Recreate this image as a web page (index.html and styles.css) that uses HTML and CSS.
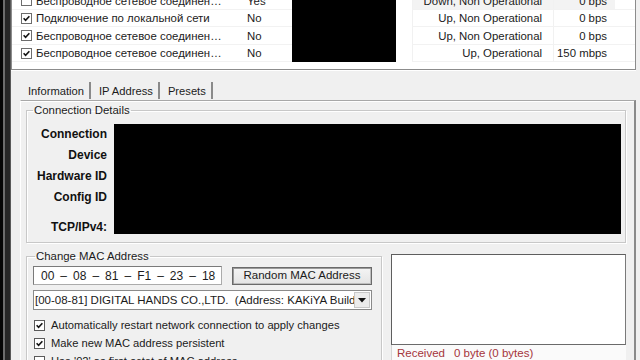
FILE: index.html
```html
<!DOCTYPE html>
<html>
<head>
<meta charset="utf-8">
<link rel="stylesheet" href="styles.css">
</head>
<body>
<div class="window">
  <div class="edge"></div>
  <div class="main">
    <div class="list">
      <div class="rows">
        <div class="redact"></div>

        <div class="c name"><span class="cb"></span><span class="txt">Беспроводное сетевое соединение 2</span></div>
        <div class="c yes">Yes</div>
        <div class="c st hl">Down, Non Operational</div>
        <div class="c bps hl">0 bps</div>
        <div class="c rest"></div>

        <div class="c name"><span class="cb on"><svg viewBox="0 0 11 11"><path d="M2 5.2 L4.4 7.8 L9 2.8" /></svg></span><span class="txt">Подключение по локальной сети</span></div>
        <div class="c yes">No</div>
        <div class="c st">Up, Non Operational</div>
        <div class="c bps">0 bps</div>
        <div class="c rest"></div>

        <div class="c name"><span class="cb on"><svg viewBox="0 0 11 11"><path d="M2 5.2 L4.4 7.8 L9 2.8" /></svg></span><span class="txt">Беспроводное сетевое соединение 3</span></div>
        <div class="c yes">No</div>
        <div class="c st">Up, Non Operational</div>
        <div class="c bps">0 bps</div>
        <div class="c rest"></div>

        <div class="c name"><span class="cb on"><svg viewBox="0 0 11 11"><path d="M2 5.2 L4.4 7.8 L9 2.8" /></svg></span><span class="txt">Беспроводное сетевое соединение 4</span></div>
        <div class="c yes">No</div>
        <div class="c st">Up, Operational</div>
        <div class="c bps">150 mbps</div>
        <div class="c rest"></div>
      </div>
    </div>

    <div class="tabs">
      <div class="tab active">Information</div>
      <div class="tab">IP Address</div>
      <div class="tab">Presets</div>
    </div>

    <div class="page">
      <fieldset class="group conn">
        <legend>Connection Details</legend>
        <div class="details">
          <div class="lbl">Connection</div>
          <div class="blackbox"></div>
          <div class="lbl">Device</div>
          <div class="lbl">Hardware ID</div>
          <div class="lbl">Config ID</div>
          <div class="lbl last">TCP/IPv4:</div>
        </div>
      </fieldset>

      <div class="lower">
        <fieldset class="group mac">
          <legend>Change MAC Address</legend>
          <div class="macrow">
            <div class="macinput"><span>00</span><span>–</span><span>08</span><span>–</span><span>81</span><span>–</span><span>F1</span><span>–</span><span>23</span><span>–</span><span>18</span></div>
            <div class="btn"><span>Random MAC Address</span></div>
          </div>
          <div class="select">
            <span class="seltext">[00-08-81] DIGITAL HANDS CO.,LTD.&nbsp; (Address: KAKiYA Building 4F)</span>
            <span class="arrow"><svg viewBox="0 0 8 5" width="8" height="5"><path d="M0 0 H8 L4 4.5 Z"/></svg></span>
          </div>
          <div class="options">
            <div class="opt"><span class="cb flat on"><svg viewBox="0 0 11 11"><path d="M2 5.2 L4.4 7.8 L9 2.8" /></svg></span>Automatically restart network connection to apply changes</div>
            <div class="opt"><span class="cb flat on"><svg viewBox="0 0 11 11"><path d="M2 5.2 L4.4 7.8 L9 2.8" /></svg></span>Make new MAC address persistent</div>
            <div class="opt"><span class="cb flat"></span>Use '02' as first octet of MAC address</div>
          </div>
        </fieldset>
        <div class="side">
          <div class="log"></div>
          <div class="status"><span class="recv">Received</span><span>0 byte (0 bytes)</span></div>
        </div>
      </div>
    </div>
  </div>
</div>
</body>
</html>
```

FILE: styles.css
```css
html, body {
  margin: 0;
  padding: 0;
}
body {
  width: 640px;
  height: 360px;
  overflow: hidden;
  background: #f0f0f0;
  font-family: "Liberation Sans", Arial, sans-serif;
  font-size: 11px;
  color: #1b1b1b;
}
.window {
  display: flex;
  height: 360px;
}
.edge {
  width: 11px;
  flex: none;
  background: linear-gradient(to right, #050505 0 3px, #6c6c6c 3px 5px, #262626 5px 10px, #5a5a5a 10px 11px);
}
.main {
  flex: 1;
  min-width: 0;
  display: flex;
  flex-direction: column;
}

/* list view */
.list {
  height: 70px;
  flex: none;
  box-sizing: border-box;
  overflow: hidden;
  background: #fff;
  border: 1px solid #8c8c8c;
  border-top: 0;
  margin-right: 4px;
  box-shadow: 0 1px 0 #fff;
}
.rows {
  display: grid;
  grid-template-columns: 228px 52px 120px 141px 62px 1fr;
  grid-auto-rows: 17.5px;
  margin-top: -7.75px;
  font-size: 11.4px;
}
.c {
  display: flex;
  align-items: center;
  white-space: nowrap;
  overflow: hidden;
  border-bottom: 1px solid #f2f2f2;
  box-sizing: border-box;
}
.name { grid-column: 1; padding-left: 9px; gap: 4px; }
.name .txt { overflow: hidden; text-overflow: ellipsis; padding-right: 18px; }
.yes { grid-column: 2; padding-left: 7px; }
.st { grid-column: 4; justify-content: flex-end; padding-right: 11px; border-left: 1px solid #f1f1f1; }
.bps { grid-column: 5; justify-content: flex-end; padding-right: 8px; border-left: 1px solid #f1f1f1; }
.rest { grid-column: 6; }
.hl { background: #f3f3f3; }
.redact {
  grid-column: 3;
  grid-row: 1 / span 4;
  width: 104px;
  background: #000;
}

/* checkboxes */
.cb {
  flex: none;
  width: 11px;
  height: 11px;
  box-sizing: border-box;
  border: 1px solid #6d6d6d;
  background: #fff;
  display: inline-flex;
}
.cb svg { width: 9px; height: 9px; }
.cb svg path { fill: none; stroke: #151515; stroke-width: 2; }

/* tabs */
.tabs {
  display: flex;
  height: 20px;
  margin: 10px 0 0 9px;
  flex: none;
}
.tab {
  padding: 0 5px 0 8px;
  line-height: 18px;
  margin-top: 2px;
  border-right: 2px solid #8a8a8a;
  height: 17px;
  font-size: 11.2px;
}

.page {
  flex: 1;
  margin: 0 4px 0 9px;
  border-top: 1px solid #a8a8a8;
  border-left: 1px solid #ffffff;
  border-right: 2px solid #8a8a8a;
  box-shadow: inset 0 1px #fff;
  padding: 2px 8px 0 5px;
}

/* group boxes */
.group {
  margin: 0;
  border: 1px solid #c8c8c8;
  box-shadow: inset 1px 1px 0 #fff, 1px 1px 0 #fff;
  min-width: 0;
}
.group legend {
  padding: 0 1px;
  margin-left: 2px;
  line-height: 14px;
  font-size: 11.4px;
}
.conn {
  padding: 7px 4px 8px 4px;
}
.details {
  display: grid;
  grid-template-columns: 76px 507px;
  grid-template-rows: 21px 21px 21px 21px 26px;
  column-gap: 7px;
}
.lbl {
  grid-column: 1;
  text-align: right;
  font-weight: bold;
  font-size: 12px;
  line-height: 21px;
  color: #111;
}
.lbl.last {
  align-self: end;
  line-height: 14px;
}
.blackbox {
  grid-column: 2;
  grid-row: 1 / span 5;
  background: #000;
}

.lower {
  display: flex;
  gap: 9px;
  align-items: flex-start;
  margin-top: 6px;
}
.mac {
  width: 356px;
  box-sizing: border-box;
  flex: none;
  padding: 3px 8px 0 6px;
}
.macrow {
  display: flex;
  gap: 10px;
  align-items: center;
}
.macinput {
  width: 189px;
  height: 19px;
  box-sizing: border-box;
  background: #fff;
  border: 1px solid #ababab;
  border-top-color: #7a7a7a;
  border-left-color: #7a7a7a;
  display: flex;
  align-items: center;
  gap: 6px;
  padding-left: 7px;
  font-size: 12px;
}
.btn {
  width: 140px;
  height: 18px;
  box-sizing: border-box;
  border: 1px solid #6a6a6a;
  background: linear-gradient(#f4f4f4, #e4e4e4);
  box-shadow: inset 1px 1px 0 #9a9a9a, inset -1px -1px 0 #bdbdbd;
  display: flex;
  align-items: center;
  justify-content: center;
  font-size: 11.5px;
}
.btn span {
  padding: 0 2px;
  line-height: 13px;
}
.select {
  margin-top: 5px;
  width: 339px;
  height: 20px;
  box-sizing: border-box;
  background: #fff;
  border: 1px solid #8a8a8a;
  display: flex;
  align-items: center;
  overflow: hidden;
}
.seltext {
  flex: 1;
  min-width: 0;
  white-space: nowrap;
  overflow: hidden;
  padding-left: 1px;
  font-size: 11.5px;
}
.arrow {
  flex: none;
  width: 16px;
  height: 16px;
  margin-right: 1px;
  box-sizing: border-box;
  border: 1px solid #c8c8c8;
  background: #ececec;
  display: flex;
  align-items: center;
  justify-content: center;
}
.arrow svg path { fill: #111; }
.options {
  margin-top: 6px;
}
.opt {
  display: flex;
  align-items: center;
  gap: 6px;
  height: 18px;
  padding-left: 1px;
  white-space: nowrap;
  font-size: 11.2px;
}
.cb.flat { border-color: #5a5a5a; }

.side {
  flex: 1;
  margin-top: 5px;
}
.log {
  height: 91px;
  box-sizing: border-box;
  background: #fff;
  border: 1px solid #5e5e5e;
  border-right-color: #7a7a7a;
  border-bottom-color: #6a6a6a;
}
.status {
  background: #fafafa;
  border-left: 1px solid #d4d4d4;
  padding-left: 5px;
  line-height: 16px;
  color: #a5353b;
  font-size: 11.5px;
  display: flex;
  gap: 9px;
}
```
